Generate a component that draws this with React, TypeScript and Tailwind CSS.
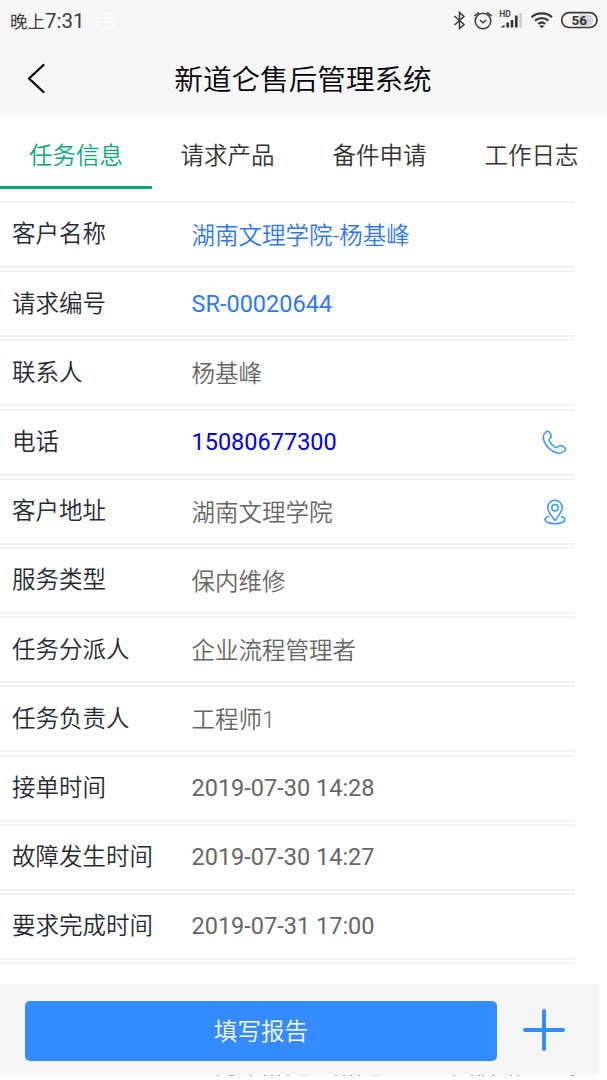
import React from "react";

type Row = { label: string; value: string; tone?: string; icon?: "phone" | "pin"; latin?: boolean };

const rows: Row[] = [
  { label: "客户名称", value: "湖南文理学院-杨基峰", tone: "text-[#2f78f0]" },
  { label: "请求编号", value: "SR-00020644", tone: "text-[#2f78f0]", latin: true },
  { label: "联系人", value: "杨基峰" },
  { label: "电话", value: "15080677300", tone: "text-[#0000ee]", icon: "phone", latin: true },
  { label: "客户地址", value: "湖南文理学院", icon: "pin" },
  { label: "服务类型", value: "保内维修" },
  { label: "任务分派人", value: "企业流程管理者" },
  { label: "任务负责人", value: "工程师1" },
  { label: "接单时间", value: "2019-07-30 14:28", latin: true },
  { label: "故障发生时间", value: "2019-07-30 14:27", latin: true },
  { label: "要求完成时间", value: "2019-07-31 17:00", latin: true },
];

const tabs = ["任务信息", "请求产品", "备件申请", "工作日志"];

function StatusBar() {
  return (
    <div className="flex h-10 items-center justify-between pl-[10px] pr-[9px] text-[#3c3c3c]">
      <div className="flex items-center gap-[10px] pt-[2px]">
        <span className="w-[75px] text-[17.500px] leading-6 font-normal whitespace-nowrap">
          晚上<span className="text-[20.500px]">7:31</span>
        </span>
        <svg width="21" height="21" viewBox="0 0 22 22" fill="none" stroke="#fff" strokeWidth="1.300" opacity="0.85">
          <circle cx="11" cy="11" r="9.500" />
          <path d="M2 8h18M4 8c0 5 6 5 7 0 1 5 7 5 7 0M6 15c3 3 7 3 10 0" />
        </svg>
      </div>
      <svg width="146" height="24" viewBox="452 8 146 24" fill="none" stroke="#3a3a3a" strokeWidth="1.500">
        <path d="m454.500 16 9.500 8.500-4.500 4v-16l4.500 4-9.500 8.500" />
        <circle cx="483" cy="21" r="7.800" />
        <path d="m480 20 3 2.800 3.400-2.800M474.300 16l4.700-3.700M491.700 16l-4.700-3.700" />
        <path d="m500.500 27.500 4-3v3z" fill="#3a3a3a" stroke="none" />
        <path d="M507.700 22.500v5M512 20v7.500M516.300 15.500v12" strokeWidth="2.700" />
        <path d="M520.600 13v14.500" stroke="#cfcfcf" strokeWidth="2.700" />
        <text x="499.300" y="17.300" fontSize="8.500" fontWeight="600" fill="#3a3a3a" stroke="none" className="font-['Roboto']">HD</text>
        <path d="M531.500 17.200c5.500-5 15-5 20.500 0M535 20.700c4-3.500 9.500-3.500 13.500 0M538.300 24c2.200-1.900 4.700-1.900 6.900 0" strokeWidth="2.200" />
        <path d="m539.200 26 2.600 2.300 2.600-2.300c-1.500-1-3.700-1-5.200 0z" fill="#3a3a3a" stroke="none" />
        <path d="M579 14.500h8.500a5.700 5.700 0 0 1 5.700 5.700v0a5.700 5.700 0 0 1-5.700 5.700H579z" fill="#d5d5d5" stroke="none" />
        <rect x="561.700" y="12.700" width="35.300" height="14.800" rx="7.400" strokeWidth="1.700" />
        <text x="579.300" y="25" fontSize="13.500" fontWeight="700" textAnchor="middle" fill="#333" stroke="none" className="font-['Roboto']">56</text>
      </svg>
    </div>
  );
}

function PhoneIcon() {
  return (
    <svg width="26" height="26" viewBox="0 0 26 26" fill="none" stroke="#3b97f5" strokeWidth="1.500" strokeLinejoin="round">
      <path d="M3.500 2.300C5.500.700 7 1.200 8.400 3.600c1.500 2.600 1.100 3.800-.7 5-1.100.8-1 1.400 0 3 1.300 2.200 3.200 4.200 5.400 5.600 1.400.9 2 .9 2.900-.3 1.200-1.700 2.600-1.900 5-.6 3 1.600 3.300 3.300 1.200 5-2.900 2.500-6.500 2.500-10.800.2-3.800-2-7-5.500-8.900-9.400C.8 8.200 1 4.500 3.500 2.300z" />
    </svg>
  );
}

function PinIcon() {
  return (
    <svg width="22" height="26" viewBox="0 0 22 26" fill="none" stroke="#3b97f5" strokeWidth="1.500" strokeLinecap="round" strokeLinejoin="round">
      <path d="M11 21.500C8.500 18.200 3.700 12.500 3.700 8.600a7.300 7.300 0 0 1 14.600 0c0 3.900-4.800 9.600-7.300 12.900z" />
      <circle cx="11" cy="8.700" r="3.200" />
      <path d="M4.500 17.500C2.500 18.200 1 19.300 1 20.600 1 23 5.500 24.700 11 24.700s10-1.700 10-4.100c0-1.300-1.500-2.400-3.500-3.100" />
    </svg>
  );
}

export default function App() {
  return (
    <div className="flex h-[1080px] w-full flex-col overflow-hidden bg-white font-['Roboto','Noto_Sans_CJK_SC',sans-serif] text-[23.500px] font-[350]">
      <header className="h-[115px] shrink-0 bg-[#f6f6f6]">
        <StatusBar />
        <div className="flex h-[75px] items-center">
          <svg className="mb-[2px] ml-[25px] shrink-0" width="24" height="34" viewBox="0 0 24 34" fill="none" stroke="#000" strokeWidth="2.300" strokeLinecap="round" strokeLinejoin="round">
            <path d="M18.500 5 4 18.500 18.500 32" />
          </svg>
          <h1 className="flex-1 pt-[5px] pr-[50px] text-center text-[28.600px] leading-[40px] font-[350] text-black">新道仑售后管理系统</h1>
        </div>
      </header>
      <nav className="flex h-[86px] shrink-0">
        {tabs.map((t, i) => (
          <button
            key={t}
            className={
              i === 0
                ? "h-[74px] w-[152px] shrink-0 border-b-[3px] border-[#06a878] pt-[13px] text-[#06a878]"
                : "h-[74px] w-[152px] shrink-0 border-b-[3px] border-transparent pt-[13px] pr-px text-[#333]"
            }
          >
            {t}
          </button>
        ))}
      </nav>
      <main className="h-[783px] w-[575px] shrink-0">
        {rows.map((r) => (
          <section key={r.label} className="h-[69.200px]">
            <div className="flex h-[67px] items-center border-t-2 border-b-2 border-[#f2f2f2] pl-3">
              <div className="w-[179.500px] pt-px text-[#1f2a33]">{r.label}</div>
              <div className={`${r.tone ?? "text-[#666]"} ${r.latin ? "pt-px font-normal" : "pt-[4px]"} flex-1`}>{r.value}</div>
              {r.icon && (
                <div className="flex w-[42px] justify-center pt-px pl-px">
                  {r.icon === "phone" ? <PhoneIcon /> : <PinIcon />}
                </div>
              )}
            </div>
          </section>
        ))}
        <div className="h-[2px] bg-[#f2f2f2]" />
      </main>
      <footer className="flex h-[91px] w-[599px] shrink-0 items-center bg-[#f6f6f6] pt-[2px] pl-[25px]">
        <button className="h-[60px] w-[472px] rounded-[5px] bg-[#338bff] pt-[4px] text-white">填写报告</button>
        <svg className="mb-px ml-[25px]" width="44" height="44" viewBox="0 0 44 44" fill="none" stroke="#338bff" strokeWidth="4" strokeLinecap="round">
          <path d="M22 3v38M3 22h38" />
        </svg>
      </footer>
      <svg width="607" height="5" viewBox="0 0 607 5" className="shrink-0" fill="none">
        <path d="M217 .5h2M229 .5h5M250 .5h2M264 .5h2M271 .5h2M278 .5h2M287 .5h2M335 .5h2M343 .5h2M350 .5h2M358 .5h2M453 .5h2M471 .5h2M478 .5h2M482 .5h2M492 .5h3M510 .5h2M517 .5h2M571 .5h4" stroke="#aaa" />
        <path d="M299 .5h10M370 .5h10" stroke="#e2e2e2" />
      </svg>
    </div>
  );
}
